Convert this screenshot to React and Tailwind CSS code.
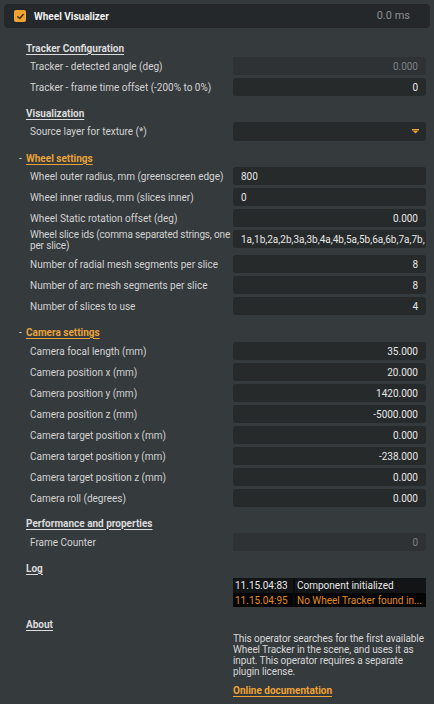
import React from 'react';

const font = { fontFamily: 'Roboto, "Noto Sans", sans-serif' };

const tracker = [
    { label: 'Tracker - detected angle (deg)', value: '0.000', disabled: true },
    { label: 'Tracker - frame time offset (-200% to 0%)', value: '0' },
];

const wheel = [
    { label: 'Wheel outer radius, mm (greenscreen edge)', value: '800', left: true },
    { label: 'Wheel inner radius, mm (slices inner)', value: '0', left: true },
    { label: 'Wheel Static rotation offset (deg)', value: '0.000' },
    { label: 'Wheel slice ids (comma separated strings, one\nper slice)', value: '1a,1b,2a,2b,3a,3b,4a,4b,5a,5b,6a,6b,7a,7b,', left: true, tall: true },
    { label: 'Number of radial mesh segments per slice', value: '8' },
    { label: 'Number of arc mesh segments per slice', value: '8' },
    { label: 'Number of slices to use', value: '4' },
];

const camera = [
    { label: 'Camera focal length (mm)', value: '35.000' },
    { label: 'Camera position x (mm)', value: '20.000' },
    { label: 'Camera position y (mm)', value: '1420.000' },
    { label: 'Camera position z (mm)', value: '-5000.000' },
    { label: 'Camera target position x (mm)', value: '0.000' },
    { label: 'Camera target position y (mm)', value: '-238.000' },
    { label: 'Camera target position z (mm)', value: '0.000' },
    { label: 'Camera roll (degrees)', value: '0.000' },
];

function Heading({ children, accent, collapsible }) {
    return (
        <div className="flex items-center h-[14px] pl-[19px]">
            <span className="w-[7px] text-[10px] text-[#d8d8d8]">{collapsible ? '-' : ''}</span>
            <span className={`text-[10px] font-bold underline underline-offset-2 ${accent ? 'text-[#e8a23a]' : 'text-[#dcdcdc]'}`}>
                {children}
            </span>
        </div>
    );
}

function Field({ label, value, disabled, left, tall }) {
    return (
        <div className={`flex ${tall ? 'items-start h-[22px]' : 'items-center h-[18px]'}`}>
            <div className={`w-[233px] shrink-0 pl-[30px] text-[10px] text-[#d2d2d2] ${tall ? 'leading-[11px] -mt-[1px] whitespace-pre tracking-[-0.15px]' : 'whitespace-nowrap pr-[4px]'}`}>{label}</div>
            <div
                className={`w-[193px] h-[18px] rounded-[3px] flex items-center px-[8px] text-[10px] whitespace-nowrap overflow-hidden ${left ? 'justify-start' : 'justify-end'} ${disabled ? 'bg-[#2e3234] text-[#7d8184]' : 'bg-[#272a2b] text-[#e6e6e6]'}`}
            >
                {value}
            </div>
        </div>
    );
}

export default function App() {
    return (
        <div className="w-[434px] h-[704px] bg-[#353a3d] overflow-hidden pt-[4px]" style={font}>
            {/* operator title bar */}
            <div className="mx-[4px] h-[24px] rounded-[4px] bg-[#25282a] flex items-center pl-[10px] pr-[20px]">
                <div className="w-[12px] h-[12px] rounded-[2px] bg-[#f0a332] flex items-center justify-center">
                    <svg width="9" height="9" viewBox="0 0 10 10" fill="none" stroke="#3a2a10" strokeWidth="1.6" strokeLinecap="round" strokeLinejoin="round">
                        <path d="M2 5.2 L4.2 7.3 L8 2.8" />
                    </svg>
                </div>
                <span className="ml-[8px] text-[10px] font-bold text-[#f0f0f0]">Wheel Visualizer</span>
                <span className="ml-auto text-[11px] text-[#8a8e91]">0.0 ms</span>
            </div>

            <div className="mt-[13px]">
                <Heading>Tracker Configuration</Heading>
                <div className="mt-[2px] flex flex-col gap-[3px]">
                    {tracker.map((f) => <Field key={f.label} {...f} />)}
                </div>
            </div>

            <div className="mt-[10px]">
                <Heading>Visualization</Heading>
                <div className="mt-[2px] flex items-center">
                    <div className="w-[233px] pl-[30px] text-[10px] text-[#d2d2d2]">Source layer for texture (*)</div>
                    <div className="w-[193px] h-[19px] rounded-[3px] bg-[#272a2b] flex items-center justify-end pr-[7px]">
                        <svg width="7" height="5" viewBox="0 0 7 5">
                            <rect x="0" y="0" width="7" height="1.5" fill="#f0a332" />
                            <path d="M1 2 L6 2 L3.5 4.6 Z" fill="#f0a332" />
                        </svg>
                    </div>
                </div>
            </div>

            <div className="mt-[10px]">
                <Heading accent collapsible>Wheel settings</Heading>
                <div className="mt-[2px] flex flex-col gap-[3px]">
                    {wheel.map((f) => <Field key={f.label} {...f} />)}
                </div>
            </div>

            <div className="mt-[10px]">
                <Heading accent collapsible>Camera settings</Heading>
                <div className="mt-[3px] flex flex-col gap-[3px]">
                    {camera.map((f) => <Field key={f.label} {...f} />)}
                </div>
            </div>

            <div className="mt-[9px]">
                <Heading>Performance and properties</Heading>
                <div className="mt-[3px]">
                    <Field label="Frame Counter" value="0" disabled />
                </div>
            </div>

            <div className="mt-[10px]">
                <Heading>Log</Heading>
                <div className="ml-[233px] mt-[3px] w-[193px] bg-[#0a0b0b] text-[10px] whitespace-nowrap">
                    <div className="flex h-[15px]">
                        <span className="w-[60px] pl-[2px] text-[#e8e8e8] bg-[#121415] flex items-center">11.15.04:83</span>
                        <span className="ml-[2px] pl-[2px] flex-1 text-[#e8e8e8] bg-[#121415] flex items-center">Component initialized</span>
                    </div>
                    <div className="flex h-[14px]">
                        <span className="w-[60px] pl-[2px] text-[#e08a1e] bg-[#050505] flex items-center">11.15.04:95</span>
                        <span className="ml-[2px] pl-[2px] flex-1 text-[#e08a1e] bg-[#050505] flex items-center">No Wheel Tracker found in...</span>
                    </div>
                </div>
            </div>

            <div className="mt-[10px]">
                <Heading>About</Heading>
                <div className="ml-[233px] mt-[2px] text-[10px] leading-[11px] tracking-[-0.1px] text-[#d6d6d6] whitespace-nowrap">
                    This operator searches for the first available<br />
                    Wheel Tracker in the scene, and uses it as<br />
                    input. This operator requires a separate<br />
                    plugin license.
                </div>
                <div className="ml-[233px] mt-[6px] text-[10px] font-bold text-[#f0a332] underline underline-offset-2">
                    Online documentation
                </div>
            </div>
        </div>
    );
}
